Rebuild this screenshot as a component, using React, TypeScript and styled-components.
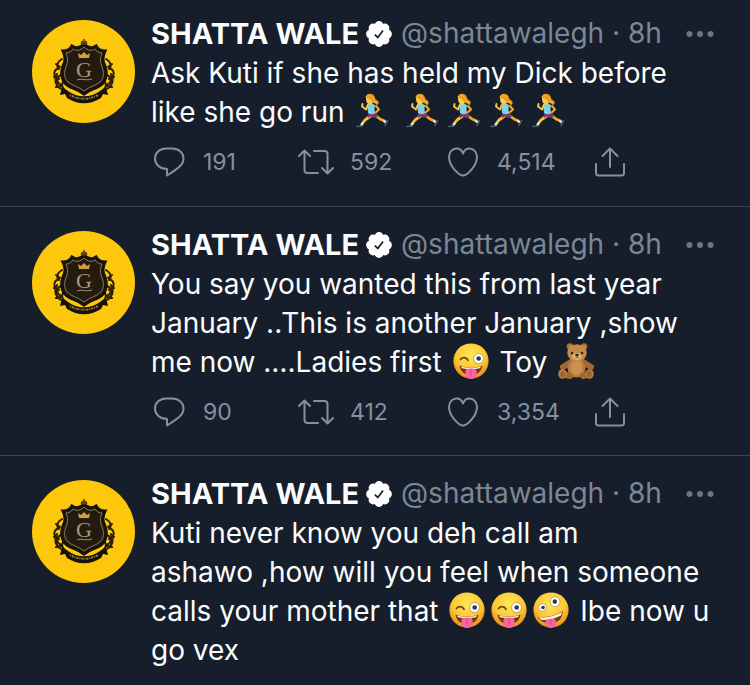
import React, { useId } from "react";
import type { ReactNode } from "react";
import styled, { createGlobalStyle } from "styled-components";

const GlobalStyle = createGlobalStyle`
  body {
    margin: 0;
    background: #161e2b;
    color: #fbfcfd;
    font-family: Inter, "Liberation Sans", sans-serif;
    font-size: 28px;
    line-height: 39px;
  }
`;

const Feed = styled.main`
  display: flex;
  flex-direction: column;
`;

const Article = styled.article`
  display: flex;
  align-items: flex-start;
  gap: 16px;
  padding: 18px 32px 26px;

  & + & {
    border-top: 1px solid #3a434e;
  }

  &:first-child {
    padding-top: 14px;
    padding-bottom: 27px;
  }

  &:last-child {
    padding-bottom: 14px;
  }
`;

const AvatarLink = styled.a`
  display: flex;
  flex: none;
  margin-top: 6px;
`;

const Content = styled.div`
  flex: 1;
  min-width: 0;
`;

const Header = styled.header`
  display: flex;
  align-items: center;
  height: 39px;
  white-space: nowrap;
`;

const Name = styled.strong`
  font-size: 29px;
  font-weight: 700;
`;

const BadgeSvg = styled.svg`
  flex: none;
  width: 26px;
  height: 26px;
  margin: 0 9px 0 7px;
`;

const Meta = styled.span`
  color: #7b8794;
`;

const HandleLink = styled.a`
  color: inherit;
  text-decoration: none;
`;

const MoreButton = styled.button`
  display: flex;
  margin-left: auto;
  padding: 0 4px 0 0;
  border: 0;
  background: none;
  color: #6b7683;
`;

const Body = styled.p`
  margin: 1px 0 0;
`;

const EmojiSvg = styled.svg`
  width: 36px;
  height: 36px;
  margin: 0 3px;
  vertical-align: -7px;
`;

const Actions = styled.div`
  display: grid;
  grid-template-columns: repeat(4, 147px);
  height: 36px;
  margin-top: 11px;
`;

const Action = styled.button`
  display: flex;
  align-items: center;
  gap: 16px;
  padding: 0;
  border: 0;
  background: none;
  color: #8491a0;
  font: inherit;
  font-size: 23px;
`;

const ActionSvg = styled.svg`
  flex: none;
  width: 36px;
  height: 36px;
  fill: none;
  stroke: currentColor;
  stroke-width: 2;
  stroke-linecap: round;
  stroke-linejoin: round;
`;

function Avatar() {
  return (
    <svg width="103" height="103" viewBox="0 0 103 103" role="img" aria-label="Shatta Wale">
      <circle cx="51.5" cy="51.5" r="51.5" fill="#fdc70c" />
      <g fill="none" stroke="#2a1f0c" strokeLinecap="round" strokeWidth="2">
        <path d="M30 39c-5 3-6 7-3 10M27 48c-6 2-6 8-1 11M29 55c-6 3-4 9 1 10M25 54c-3 6-2 11 4 15M24 44l4 3M22 57l5 2M24 67l6-1M31 62c-2 4 0 7 3 9" />
        <path d="M74 39c5 3 6 7 3 10M77 48c6 2 6 8 1 11M75 55c6 3 4 9-1 10M79 54c3 6 2 11-4 15M80 44l-4 3M82 57l-5 2M80 67l-6-1M73 62c2 4 0 7-3 9" />
      </g>
      <path
        d="M52 24c-4 5-9 4-12 2-2 4-6 5-9 5 3 6 3 10 0 15-2 6-2 12 2 17 5 6 12 5 19 11 7-6 14-5 19-11 4-5 4-11 2-17-3-5-3-9 0-15-3 0-7-1-9-5-3 2-8 3-12-2z"
        fill="#231b10"
        stroke="#17120c"
        strokeWidth="3"
      />
      <path
        d="M52 27c-4 4-8 4-11 2-2 3-4 4-7 4 2 5 2 9 0 14-2 5-2 10 1 14 5 5 11 5 17 10 6-5 12-5 17-10 3-4 3-9 1-14-2-5-2-9 0-14-3 0-5-1-7-4-3 2-7 2-11-2z"
        fill="none"
        stroke="#8d7a55"
        strokeWidth="1"
      />
      <path d="M49 24l1-3 2 1v-3 3l2-1 1 3z" fill="#5b430c" stroke="#5b430c" />
      <path d="M47 38l-1-5 3 2 3-3 3 3 3-2-1 5z" fill="#d0a13a" />
      <text x="52" y="57" textAnchor="middle" fontFamily="Liberation Serif, serif" fontSize="22" fill="#a79877">
        G
      </text>
      <path d="M45 60c5-2 8 1 15-1" fill="none" stroke="#a79877" strokeWidth="1" />
      <path d="M30 67l6 4c9 7 23 7 32 0l6-4 2 8-5-1-2 4c-11 7-23 7-34 0l-2-4-5 1z" fill="#17120c" />
      <path d="M38 75c9 5 19 5 28 0" fill="none" stroke="#9c8040" strokeWidth="2" strokeDasharray="1 1 2 1" />
    </svg>
  );
}

function VerifiedBadge() {
  return (
    <BadgeSvg viewBox="0 0 26 26" role="img" aria-label="Verified account">
      <g fill="#ffffff">
        <circle cx="13" cy="13" r="10" />
        <circle cx="13" cy="4.6" r="4.5" />
        <circle cx="18.9" cy="7.1" r="4.5" />
        <circle cx="21.4" cy="13" r="4.5" />
        <circle cx="18.9" cy="18.9" r="4.5" />
        <circle cx="13" cy="21.4" r="4.5" />
        <circle cx="7.1" cy="18.9" r="4.5" />
        <circle cx="4.6" cy="13" r="4.5" />
        <circle cx="7.1" cy="7.1" r="4.5" />
      </g>
      <path d="M8.8 13.6l3 2.8 5.2-7" fill="none" stroke="#161e2b" strokeWidth="1.7" />
    </BadgeSvg>
  );
}

function Runner() {
  return (
    <EmojiSvg viewBox="0 0 36 36" role="img" aria-label="woman running">
      <g fill="none" strokeLinecap="round" strokeLinejoin="round">
        <path d="M20 22l5 4 4.500 2" stroke="#eda91f" strokeWidth="2.8" />
        <path d="M29 28l1 1" stroke="#e9e6e2" strokeWidth="2.2" />
        <path d="M32.500 27.500l-2.500 5" stroke="#536078" strokeWidth="1.5" />
        <path d="M17 22l-7 5-3 4" stroke="#fbc02f" strokeWidth="2.8" />
        <path d="M7.500 30.500l-1 1.500" stroke="#e9e6e2" strokeWidth="2.2" />
        <path d="M2 33.600l5-.6" stroke="#536078" strokeWidth="1.5" />
        <path d="M21 13l3 3.500-4 3.500" stroke="#f2ad22" strokeWidth="2" />
      </g>
      <path d="M14.500 19.500l7 .5 1.500 3.500-4 1.500-3-1.500-3 1.500-.5-3z" fill="#7c3867" />
      <path d="M12 11c3-1 6-.5 8 1l-.5 4 .5 4.500c-3 1.300-5 .8-7-.5z" fill="#82d1e4" />
      <path d="M12.500 12.500l-1.500 4-4-3 .5-2.500" fill="none" stroke="#fcc235" strokeWidth="2" strokeLinecap="round" strokeLinejoin="round" />
      <path d="M11 4c0 5 1 7 4 8l3-2-1-6z" fill="#ffcd42" />
      <path d="M10.500 5c0-4 5-5.500 8-3 2 2 1 4 3 5 2.500 1 3 3 .5 5.500-1-3-4-2-5-3.500-1-2-2-4-6.500-4z" fill="#e9981c" />
      <path d="M11.500 3.500c3-2 6-.5 6.500 2M18 7c1 2 2.500 2 4 3" fill="none" stroke="#fbc341" strokeLinecap="round" />
    </EmojiSvg>
  );
}

function FaceBase({ label, children }: { label: string; children: ReactNode }) {
  const id = useId();
  return (
    <EmojiSvg viewBox="0 0 36 36" role="img" aria-label={label}>
      <defs>
        <radialGradient id={id} cx="0.5" cy="0.32" r="0.68">
          <stop offset="0" stopColor="#ffe854" />
          <stop offset="0.6" stopColor="#fdc835" />
          <stop offset="1" stopColor="#e88a19" />
        </radialGradient>
      </defs>
      <circle cx="18" cy="18" r="17.6" fill={`url(#${id})`} />
      {children}
    </EmojiSvg>
  );
}

function WinkFace() {
  return (
    <FaceBase label="winking face with tongue">
      <path d="M7.500 16.500c2-2.500 5.500-2.500 7.500.8" fill="none" stroke="#68401a" strokeWidth="1.8" strokeLinecap="round" />
      <circle cx="25.500" cy="15.500" r="5" fill="#ffffff" stroke="#b98d4a" strokeWidth="0.8" />
      <circle cx="25.700" cy="15.500" r="2.300" fill="#253c55" />
      <path d="M6.500 22.500c7 3 16 3 23 0-1 6-5 9.500-11.500 9.500S7.500 28.500 6.500 22.500z" fill="#75350f" />
      <path d="M8 23.200c6 2 14 2 20 0l-.8 2c-6 1.500-12.400 1.500-18.400 0z" fill="#f6ede0" />
      <path d="M12.500 27c3-2 8-2 11 0v4.500c0 6-11 6-11 0z" fill="#f764a0" />
      <path d="M18 27v5" stroke="#d63e7d" strokeLinecap="round" />
    </FaceBase>
  );
}

function ZanyFace() {
  return (
    <FaceBase label="zany face">
      <circle cx="9.500" cy="15.500" r="3.900" fill="#ffffff" stroke="#b98d4a" strokeWidth="0.8" />
      <circle cx="10" cy="15.500" r="1.800" fill="#2e3438" />
      <circle cx="22" cy="9.800" r="5" fill="#ffffff" stroke="#b98d4a" strokeWidth="0.8" />
      <circle cx="21.800" cy="9.500" r="2.200" fill="#2e3438" />
      <path d="M4.500 25c9 1 17-1 25.500-6-.5 7-4 11.500-11 12-6 .5-11-1-14.500-6z" fill="#75350f" />
      <path d="M5.500 25.300c9 .7 16-1.300 23.700-5.300l-1.200 3.500c-6 3.300-13 5-20 4.200z" fill="#f9f1e3" />
      <path d="M12.500 28.500c3-2 7-2.500 10-1l.5 4c0 5.500-9.500 6-10.200.5z" fill="#f764a0" />
      <path d="M17.700 28l.3 4" stroke="#d63e7d" strokeLinecap="round" />
    </FaceBase>
  );
}

function TeddyBear() {
  return (
    <EmojiSvg viewBox="0 0 36 36" role="img" aria-label="teddy bear">
      <circle cx="12" cy="3.500" r="3.300" fill="#a86f35" />
      <circle cx="26" cy="3.500" r="3.300" fill="#a86f35" />
      <circle cx="12.300" cy="4" r="1.600" fill="#cf9c5f" />
      <circle cx="25.700" cy="4" r="1.600" fill="#cf9c5f" />
      <path d="M13 19l-8 5M25 19l8 5" stroke="#a4682f" strokeWidth="6" strokeLinecap="round" />
      <ellipse cx="18.500" cy="25" rx="9" ry="9.500" fill="#b97c3e" />
      <ellipse cx="18.500" cy="25" rx="6" ry="7" fill="#cb9150" />
      <ellipse cx="19" cy="10" rx="9.700" ry="8.800" fill="#c58a48" />
      <path d="M12 33l-6-1.500M25 33l6-1.500" stroke="#a4682f" strokeWidth="6" strokeLinecap="round" />
      <ellipse cx="4.500" cy="31" rx="4.300" ry="4.800" fill="#b97b3d" />
      <ellipse cx="31.500" cy="31" rx="4.300" ry="4.800" fill="#b97b3d" />
      <ellipse cx="4.700" cy="31.200" rx="2.500" ry="3" fill="#9c6433" />
      <ellipse cx="31.300" cy="31.200" rx="2.500" ry="3" fill="#9c6433" />
      <ellipse cx="19" cy="13.500" rx="4.600" ry="3.600" fill="#dfb679" />
      <circle cx="14" cy="10" r="1.200" fill="#2b1a10" />
      <circle cx="24" cy="10" r="1.200" fill="#2b1a10" />
      <ellipse cx="19" cy="12" rx="1.800" ry="1.200" fill="#2b1a10" />
      <path d="M19 12v2.500M17 15c1-.7 3-.7 4 0" fill="none" stroke="#6b4020" strokeWidth="0.7" />
    </EmojiSvg>
  );
}

function ReplyIcon() {
  return (
    <ActionSvg viewBox="0 1 36 36" aria-hidden="true">
      <path d="M16 25C9 24.800 4 20.500 4 14.500 4 8.500 9 4.500 15 4.500h6c6.500 0 11.500 4 11.500 10 0 3.500-1.800 6.500-5 9-3 2.500-7.500 5.500-11.500 8z" />
    </ActionSvg>
  );
}

function RetweetIcon() {
  return (
    <ActionSvg viewBox="0 1 36 36" aria-hidden="true">
      <path d="M1 12l5.500-5.500L12 12M6.500 7v19c0 2 1 3 3 3H20M24 24l5.500 5.500L35 24M29.500 29V10c0-2-1-3-3-3H16" />
    </ActionSvg>
  );
}

function LikeIcon() {
  return (
    <ActionSvg viewBox="0 1 36 36" aria-hidden="true">
      <path d="M18 31.500C14.500 31.500 4 22.500 4 13 4 8 7.500 4.500 11.500 4.500c3 0 5.500 2 6.500 5 1-3 3.500-5 6.500-5C28.500 4.500 32 8 32 13c0 9.500-10.500 18.500-14 18.500z" />
    </ActionSvg>
  );
}

function ShareIcon() {
  return (
    <ActionSvg viewBox="0 1 36 36" aria-hidden="true">
      <path d="M10.500 12L18 4.500l7.500 7.500M18 5v18M4 20v9c0 1.500 1 2.500 2.500 2.500h23c1.500 0 2.500-1 2.500-2.500v-9" />
    </ActionSvg>
  );
}

interface Counts {
  replies: string;
  retweets: string;
  likes: string;
}

function TweetActions({ replies, retweets, likes }: Counts) {
  return (
    <Actions>
      <Action type="button" aria-label={`Reply, ${replies}`}>
        <ReplyIcon />
        {replies}
      </Action>
      <Action type="button" aria-label={`Retweet, ${retweets}`}>
        <RetweetIcon />
        {retweets}
      </Action>
      <Action type="button" aria-label={`Like, ${likes}`}>
        <LikeIcon />
        {likes}
      </Action>
      <Action type="button" aria-label="Share">
        <ShareIcon />
      </Action>
    </Actions>
  );
}

function Tweet({ counts, children }: { counts?: Counts; children: ReactNode }) {
  return (
    <Article>
      <AvatarLink href="#profile">
        <Avatar />
      </AvatarLink>
      <Content>
        <Header>
          <Name>SHATTA WALE</Name>
          <VerifiedBadge />
          <Meta>
            <HandleLink href="#profile">@shattawalegh</HandleLink> · 8h
          </Meta>
          <MoreButton type="button" aria-label="More">
            <svg width="28" height="8" viewBox="0 0 28 8" fill="currentColor" aria-hidden="true">
              <circle cx="3.5" cy="4" r="3" />
              <circle cx="14" cy="4" r="3" />
              <circle cx="24.5" cy="4" r="3" />
            </svg>
          </MoreButton>
        </Header>
        <Body>{children}</Body>
        {counts && <TweetActions {...counts} />}
      </Content>
    </Article>
  );
}

export default function App() {
  return (
    <>
      <GlobalStyle />
      <Feed>
        <Tweet counts={{ replies: "191", retweets: "592", likes: "4,514" }}>
          Ask Kuti if she has held my Dick before like she go run <Runner /> <Runner />
          <Runner />
          <Runner />
          <Runner />
        </Tweet>
        <Tweet counts={{ replies: "90", retweets: "412", likes: "3,354" }}>
          You say you wanted this from last year January ..This is another January ,show me now ….Ladies first{" "}
          <WinkFace /> Toy <TeddyBear />
        </Tweet>
        <Tweet>
          Kuti never know you deh call am
          <br />
          ashawo ,how will you feel when someone calls your mother that <WinkFace />
          <WinkFace />
          <ZanyFace /> Ibe now u go vex
        </Tweet>
      </Feed>
    </>
  );
}
